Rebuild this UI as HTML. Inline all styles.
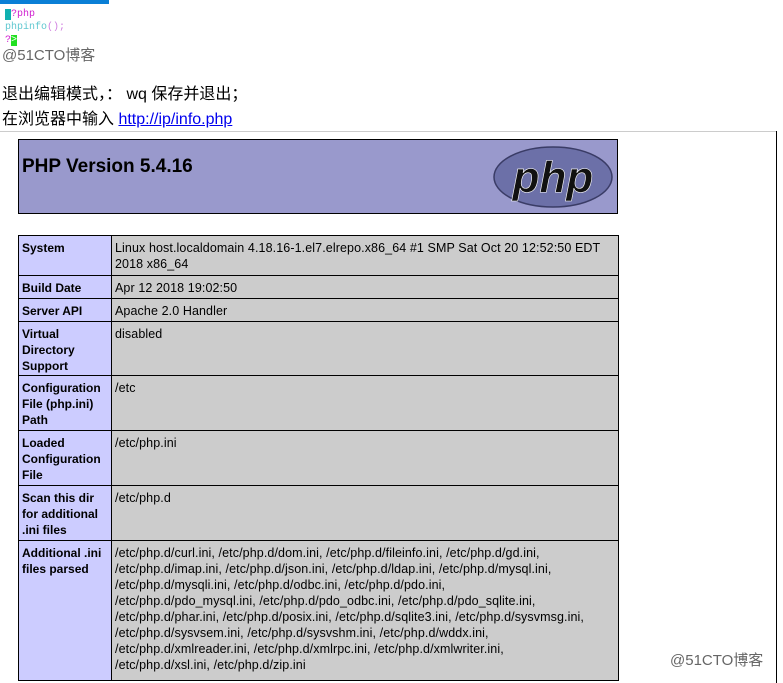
<!DOCTYPE html>
<html><head><meta charset="utf-8"><style>
body{margin:0;width:783px;height:683px;overflow:hidden;background:#fff;position:relative;font-family:"Liberation Sans","Noto Sans CJK SC",sans-serif}
.a{position:absolute}
.code{font-family:"Liberation Mono",monospace;font-size:10px;line-height:11px}
.wm{color:#666;font-size:15px}
table{position:absolute;left:18px;top:235px;width:601px;border-collapse:collapse;table-layout:fixed;font-size:12px;line-height:16px}
td{border:1px solid #000;vertical-align:top;padding:4px 3px 0 3px;color:#000;box-sizing:border-box}
td.e{background:#ccccff;font-weight:bold;width:93px}
td.v{background:#cccccc;white-space:nowrap;overflow:hidden;font-size:12.5px;letter-spacing:0.1px}
</style></head><body>
<div class="a" style="left:0;top:0;width:109px;height:4px;background:#0a7fd6"></div>
<div class="a code" style="left:5px;top:9px;color:#d020d0"><span style="background:#10b0b0;color:#10b0b0">&lt;</span>?php</div>
<div class="a code" style="left:5px;top:22px;color:#60c8d0">phpinfo<span style="color:#d080e0">();</span></div>
<div class="a code" style="left:5px;top:35px;color:#d020d0">?<span style="background:#20e020;color:#fff">&gt;</span></div>
<div class="a wm" style="left:2px;top:44px">@51CTO博客</div>
<div class="a" style="left:2px;top:80px;font-size:16px;color:#000">退出编辑模式，： wq 保存并退出；</div>
<div class="a" style="left:2px;top:105px;font-size:16px;color:#000">在浏览器中输入 <span style="color:#0000ee;text-decoration:underline">http://ip/info.php</span></div>
<div class="a" style="left:0;top:131px;width:777px;height:1px;background:#ccc"></div>
<div class="a" style="left:776px;top:131px;width:1px;height:552px;background:#000"></div>
<div class="a" style="left:18px;top:139px;width:598px;height:73px;background:#9999cc;border:1px solid #000"></div>
<div class="a" style="left:22px;top:156px;font-size:19px;font-weight:bold;color:#000">PHP Version 5.4.16</div>
<svg class="a" style="left:492px;top:144px" width="122" height="66" viewBox="0 0 122 66">
<ellipse cx="61" cy="33" rx="59" ry="30" fill="#6c70a8" stroke="#3a3c66" stroke-width="1.5"/>
<text x="61" y="48" text-anchor="middle" font-family="Liberation Sans" font-style="italic" font-weight="bold" font-size="44" fill="#111" stroke="#fff" stroke-width="0.6">php</text>
</svg>
<table>
<tr style="height:40px"><td class="e">System</td><td class="v">Linux host.localdomain 4.18.16-1.el7.elrepo.x86_64 #1 SMP Sat Oct 20 12:52:50 EDT<br>2018 x86_64</td></tr>
<tr style="height:23px"><td class="e">Build Date</td><td class="v">Apr 12 2018 19:02:50</td></tr>
<tr style="height:23px"><td class="e">Server API</td><td class="v">Apache 2.0 Handler</td></tr>
<tr style="height:54px"><td class="e">Virtual Directory Support</td><td class="v">disabled</td></tr>
<tr style="height:55px"><td class="e">Configuration File (php.ini) Path</td><td class="v">/etc</td></tr>
<tr style="height:55px"><td class="e">Loaded Configuration File</td><td class="v">/etc/php.ini</td></tr>
<tr style="height:55px"><td class="e">Scan this dir for additional .ini files</td><td class="v">/etc/php.d</td></tr>
<tr style="height:140px"><td class="e">Additional .ini files parsed</td><td class="v">/etc/php.d/curl.ini, /etc/php.d/dom.ini, /etc/php.d/fileinfo.ini, /etc/php.d/gd.ini,<br>/etc/php.d/imap.ini, /etc/php.d/json.ini, /etc/php.d/ldap.ini, /etc/php.d/mysql.ini,<br>/etc/php.d/mysqli.ini, /etc/php.d/odbc.ini, /etc/php.d/pdo.ini,<br>/etc/php.d/pdo_mysql.ini, /etc/php.d/pdo_odbc.ini, /etc/php.d/pdo_sqlite.ini,<br>/etc/php.d/phar.ini, /etc/php.d/posix.ini, /etc/php.d/sqlite3.ini, /etc/php.d/sysvmsg.ini,<br>/etc/php.d/sysvsem.ini, /etc/php.d/sysvshm.ini, /etc/php.d/wddx.ini,<br>/etc/php.d/xmlreader.ini, /etc/php.d/xmlrpc.ini, /etc/php.d/xmlwriter.ini,<br>/etc/php.d/xsl.ini, /etc/php.d/zip.ini</td></tr>
</table>
<div class="a wm" style="left:670px;top:649px">@51CTO博客</div>
</body></html>
